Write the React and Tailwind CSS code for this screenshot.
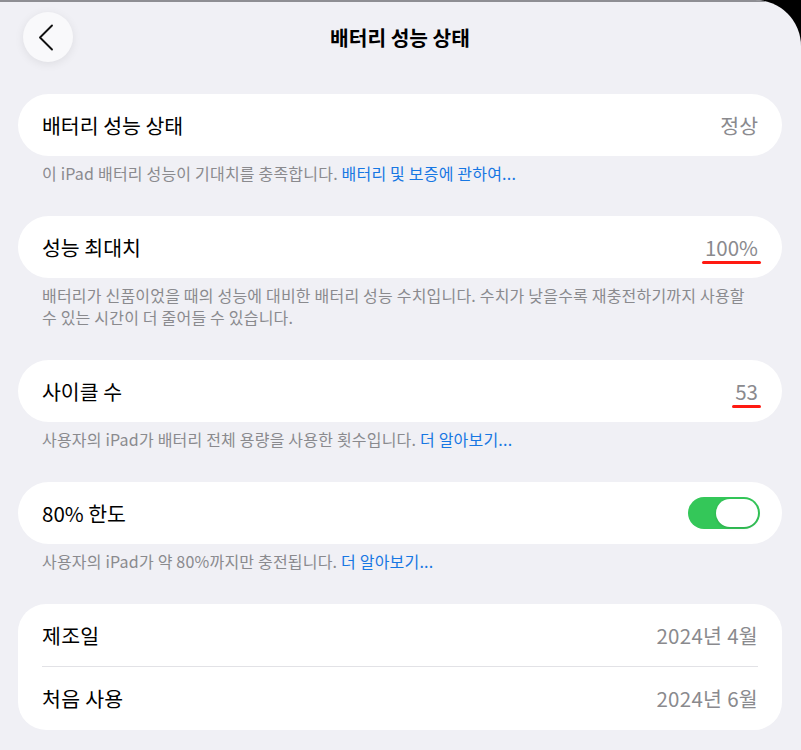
import { useState } from "react"

const font = { fontFamily: '"Noto Sans CJK KR", "Noto Sans", sans-serif' }

function Underlined({ children }) {
    return (
        <span className="relative inline-block">
            {children}
            <span className="absolute left-[-3px] right-[-3px] bottom-[-2px] h-[3px] bg-[#ff1a12] rounded-full" />
        </span>
    )
}

function Section({ children, footer }) {
    return (
        <div className="flex flex-col">
            <div className="bg-white rounded-[31px] h-[62px] px-[24px] flex items-center justify-between text-[20.5px] text-black">
                {children}
            </div>
            <div className="mt-[6px] px-[24px] text-[16px] tracking-[0.2px] leading-[22px] text-[#8a8a8e]">
                {footer}
            </div>
        </div>
    )
}

function Link({ children }) {
    return <span className="text-[#1777e3]">{children}</span>
}

export default function App() {
    const [limit, setLimit] = useState(true)

    return (
        <div className="w-[801px] h-[750px] bg-black overflow-hidden" style={font}>
            <div className="w-full h-full bg-[#f0f0f5] rounded-tr-[46px] relative overflow-hidden">
                <div className="h-[2px] bg-[#8e8e93] mr-[36px]" />

                <div className="pl-[18px] pr-[19px]">
                    {/* 헤더 */}
                    <div className="relative h-[92px] flex items-start">
                        <button className="mt-[10px] ml-[5px] w-[50px] h-[50px] rounded-full bg-[#f9f9fb] shadow-[0_2px_10px_rgba(0,0,0,0.08)] flex items-center justify-center">
                            <svg width="50" height="50" viewBox="0 0 50 50">
                                <path d="M29 13.5 L17 25.5 L29 37.5" fill="none" stroke="#111" strokeWidth="1.9" strokeLinecap="round" strokeLinejoin="round" />
                            </svg>
                        </button>
                        <div className="absolute left-0 right-0 top-[20px] text-center text-[20.3px] font-bold text-black">
                            배터리 성능 상태
                        </div>
                    </div>

                    <div className="flex flex-col gap-[32px]">
                        <Section
                            footer={<>이 iPad 배터리 성능이 기대치를 충족합니다. <Link>배터리 및 보증에 관하여...</Link></>}
                        >
                            <span>배터리 성능 상태</span>
                            <span className="text-[#8a8a8e]">정상</span>
                        </Section>

                        <Section
                            footer="배터리가 신품이었을 때의 성능에 대비한 배터리 성능 수치입니다. 수치가 낮을수록 재충전하기까지 사용할 수 있는 시간이 더 줄어들 수 있습니다."
                        >
                            <span>성능 최대치</span>
                            <span className="text-[#8a8a8e]"><Underlined>100%</Underlined></span>
                        </Section>

                        <Section
                            footer={<>사용자의 iPad가 배터리 전체 용량을 사용한 횟수입니다. <Link>더 알아보기...</Link></>}
                        >
                            <span>사이클 수</span>
                            <span className="text-[#8a8a8e]"><Underlined>53</Underlined></span>
                        </Section>

                        <Section
                            footer={<>사용자의 iPad가 약 80%까지만 충전됩니다. <Link>더 알아보기...</Link></>}
                        >
                            <span>80% 한도</span>
                            <button
                                onClick={() => setLimit(!limit)}
                                className={limit
                                    ? "w-[72px] h-[32px] mr-[-2px] rounded-full bg-[#34c759] flex items-center justify-end px-[2px]"
                                    : "w-[72px] h-[32px] mr-[-2px] rounded-full bg-[#e5e5ea] flex items-center justify-start px-[2px]"}
                            >
                                <span className="w-[42px] h-[28px] rounded-full bg-white shadow-[0_1px_3px_rgba(0,0,0,0.15)]" />
                            </button>
                        </Section>

                        <div className="bg-white rounded-[28px] px-[24px] text-[20.5px] tracking-[0.3px]">
                            <div className="h-[63px] flex items-center justify-between border-b border-[#e2e2e6]">
                                <span>제조일</span>
                                <span className="text-[#8a8a8e]">2024년 4월</span>
                            </div>
                            <div className="h-[63px] flex items-center justify-between">
                                <span>처음 사용</span>
                                <span className="text-[#8a8a8e]">2024년 6월</span>
                            </div>
                        </div>
                    </div>
                </div>
            </div>
        </div>
    )
}
